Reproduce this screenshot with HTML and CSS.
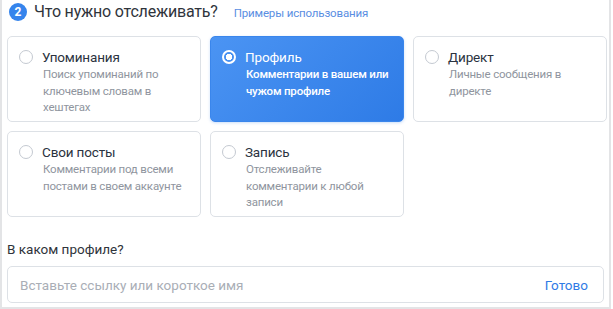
FILE: index.html
```html
<!DOCTYPE html>
<html lang="ru">
<head>
    <meta charset="UTF-8">
    <meta name="viewport" content="width=device-width, initial-scale=1.0">
    <title>Что нужно отслеживать?</title>
    <link rel="stylesheet" href="styles.css">
</head>
<body>
    <div class="panel">
        <div class="step-head">
            <span class="step-num">2</span>
            <h2>Что нужно отслеживать?</h2>
            <a class="help-link" href="#">Примеры использования</a>
        </div>

        <div class="options">
            <label class="option">
                <span class="radio"></span>
                <span class="option-body">
                    <span class="option-title">Упоминания</span>
                    <span class="option-desc">Поиск упоминаний по ключевым словам в хештегах</span>
                </span>
            </label>
            <label class="option active">
                <span class="radio"></span>
                <span class="option-body">
                    <span class="option-title">Профиль</span>
                    <span class="option-desc">Комментарии в вашем или чужом профиле</span>
                </span>
            </label>
            <label class="option">
                <span class="radio"></span>
                <span class="option-body">
                    <span class="option-title">Директ</span>
                    <span class="option-desc">Личные сообщения в директе</span>
                </span>
            </label>
            <label class="option">
                <span class="radio"></span>
                <span class="option-body">
                    <span class="option-title">Свои посты</span>
                    <span class="option-desc">Комментарии под всеми постами в своем аккаунте</span>
                </span>
            </label>
            <label class="option">
                <span class="radio"></span>
                <span class="option-body">
                    <span class="option-title">Запись</span>
                    <span class="option-desc">Отслеживайте комментарии к любой записи</span>
                </span>
            </label>
        </div>

        <div class="field-label">В каком профиле?</div>
        <div class="field">
            <input type="text" placeholder="Вставьте ссылку или короткое имя">
            <button class="done-btn">Готово</button>
        </div>
    </div>
</body>
</html>
```

FILE: styles.css
```css
* { box-sizing: border-box; margin: 0; padding: 0; }
body {
    font-family: Roboto, "Noto Sans", sans-serif;
    background: #fff;
    color: #2b3340;
}
.panel {
    width: 611px;
    height: 309px;
    border: 2px solid #e3e4e6;
    border-top: none;
    padding: 0 2px 0 5px;
}
.step-head {
    display: flex;
    align-items: center;
    height: 23px;
    margin-bottom: 13px;
}
.step-num {
    width: 18px;
    height: 18px;
    border-radius: 50%;
    background: #3584ec;
    color: #fff;
    font-size: 12px;
    font-weight: 700;
    display: flex;
    align-items: center;
    justify-content: center;
    margin-left: 2px;
    margin-right: 7px;
}
.step-head h2 {
    font-size: 16px;
    font-weight: 400;
    letter-spacing: -0.2px;
    color: #2f343b;
}
.help-link {
    margin-left: 16px;
    font-size: 11.5px;
    letter-spacing: -0.15px;
    color: #5a8ee2;
    text-decoration: none;
    padding-top: 2px;
}
.options {
    display: grid;
    grid-template-columns: repeat(3, 194px);
    grid-auto-rows: 86px;
    gap: 9px;
}
.option {
    display: flex;
    gap: 9px;
    border: 1px solid #dde1e6;
    border-radius: 5px;
    padding: 11px 10px 0 11px;
    cursor: pointer;
}
.radio {
    flex: none;
    width: 14px;
    height: 14px;
    margin-top: 2px;
    border: 1px solid #c4c9d1;
    border-radius: 50%;
    background: #fff;
}
.option-body {
    display: flex;
    flex-direction: column;
}
.option-title {
    font-size: 13.5px;
    letter-spacing: -0.15px;
    line-height: 18px;
    color: #2b3340;
}
.option-desc {
    font-size: 11.5px;
    letter-spacing: -0.2px;
    line-height: 16.5px;
    color: #8f959e;
    margin-left: 1px;
}
.option.active {
    background: linear-gradient(135deg, #4b94f3 0%, #2e7be6 100%);
    border-color: #3a86ec;
    box-shadow: 0 1px 3px rgba(46, 123, 230, 0.25);
}
.option.active .radio {
    border: 2px solid #fff;
    background: radial-gradient(circle, #fff 0 3px, transparent 3.5px);
}
.option.active .option-title { color: #fff; }
.option.active .option-desc {
    color: #fff;
    font-weight: 500;
}
.field-label {
    margin-top: 24px;
    font-size: 13.5px;
    line-height: 17px;
    color: #2f343b;
}
.field {
    display: flex;
    align-items: center;
    margin-top: 8px;
    width: 597px;
    height: 37px;
    border: 1px solid #dde1e6;
    border-radius: 5px;
    padding: 0 15px 0 12px;
}
.field input {
    flex: 1;
    border: none;
    outline: none;
    font-family: inherit;
    font-size: 13.5px;
    color: #2f343b;
}
.field input::placeholder { color: #a9aeb6; }
.done-btn {
    border: none;
    background: none;
    font-family: inherit;
    font-size: 13.5px;
    color: #2f7be5;
    cursor: pointer;
}
```
